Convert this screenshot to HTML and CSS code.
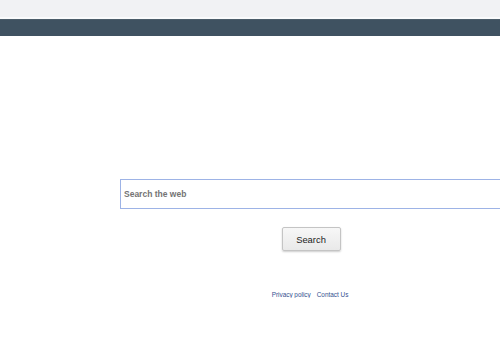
FILE: index.html
```html
<!DOCTYPE html>
<html lang="en">
<head>
    <title>Search</title>
    <link rel="stylesheet" href="styles.css">
</head>
<body>
    <div class="topbar"></div>
    <div class="navbar"></div>

    <div class="page">
        <form class="search-form">
            <input type="text" class="search-input" placeholder="Search the web" autofocus>
            <div class="button-row">
                <button type="button" class="search-button">Search</button>
            </div>
        </form>

        <div class="footer">
            <a href="#">Privacy policy</a>
            <a href="#">Contact Us</a>
        </div>
    </div>
</body>
</html>
```

FILE: styles.css
```css
body {
    font-family: "Liberation Sans", Arial, sans-serif;
    background-color: #fff;
    margin: 0;
    overflow: hidden;
}

.topbar {
    height: 17px;
    background-color: #f1f2f4;
    border-bottom: 2px solid #fafbfc;
}

.navbar {
    height: 16px;
    background-color: #3f5261;
    border-top: 1px solid #4c5d6a;
}

.search-form {
    margin: 143px 0 0 120px;
}

.search-input {
    display: block;
    width: 380px;
    height: 30px;
    box-sizing: border-box;
    padding: 0 3px;
    border: 1px solid #9db3e6;
    border-right: none;
    outline: none;
    font-family: inherit;
    font-size: 8.5px;
    font-weight: bold;
    color: #333;
}

.search-input::placeholder {
    color: #747474;
}

.button-row {
    display: flex;
    justify-content: center;
    padding-top: 18px;
}

.search-button {
    margin-left: 2px;
    width: 59px;
    height: 24px;
    border: 1px solid #c4c4c4;
    border-radius: 2px;
    background: linear-gradient(#f7f7f7, #e9e9e9);
    box-shadow: 0 1px 2px rgba(0,0,0,0.2);
    font-family: inherit;
    font-size: 9.4px;
    color: #222;
}

.footer {
    display: flex;
    justify-content: center;
    gap: 6px;
    margin: 40px 0 0 120px;
    font-size: 6.4px;
}

.footer a {
    color: #34508f;
    text-decoration: none;
}
```
